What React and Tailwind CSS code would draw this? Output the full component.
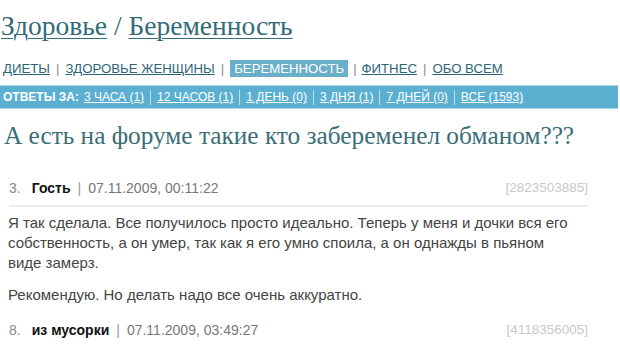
import React from "react";

const serif = { fontFamily: '"Liberation Serif", "Times New Roman", serif' };
const sans = { fontFamily: '"Liberation Sans", Arial, sans-serif' };

function NavSep({ className = "mx-[6px]" }) {
  return <span className={`${className} text-[#8a8a8a]`}>|</span>;
}

function BarSep() {
  return <span className="mx-[6px] inline-block h-[15px] w-px bg-[#b9dff0] align-middle" />;
}

function PostHeader({ num, name, date, id }) {
  return (
    <div className="flex items-center justify-between border-b-2 border-[#ececec] pb-[9px] text-[14px] leading-[16px]">
      <div className="flex items-center">
        <span className="text-[#8a8a8a]">{num}.</span>
        <span className="ml-[11px] font-bold text-[#111]">{name}</span>
        <span className="mx-[7px] text-[#9a9a9a]">|</span>
        <span className="text-[#777]">{date}</span>
      </div>
      <span className="text-[13.5px] text-[#c9c9c9]">[{id}]</span>
    </div>
  );
}

export default function App() {
  const bar = [
    "3 ЧАСА (1)",
    "12 ЧАСОВ (1)",
    "1 ДЕНЬ (0)",
    "3 ДНЯ (1)",
    "7 ДНЕЙ (0)",
    "ВСЕ (1593)",
  ];
  return (
    <div className="h-[347px] w-[620px] overflow-hidden bg-white" style={sans}>
      <div className="pl-[1px] pt-[10px] text-[27.5px] leading-[31px] text-[#336b77]" style={serif}>
        <span className="underline decoration-1 underline-offset-[3px]">Здоровье</span>
        <span> / </span>
        <span className="underline decoration-1 underline-offset-[3px]">Беременность</span>
      </div>

      <div className="mt-[19px] flex items-center pl-[3px] text-[13.2px] leading-[17px] text-[#2c6577]">
        <span className="underline">ДИЕТЫ</span>
        <NavSep />
        <span className="underline">ЗДОРОВЬЕ ЖЕНЩИНЫ</span>
        <NavSep />
        <span className="bg-[#6aafc9] px-[4px] text-white">БЕРЕМЕННОСТЬ</span>
        <NavSep className="mx-[5px]" />
        <span className="underline">ФИТНЕС</span>
        <NavSep />
        <span className="underline">ОБО ВСЕМ</span>
      </div>

      <div className="mt-[8px] mr-[2px] flex h-[24px] items-center border-y border-[#a8d7ea] bg-[#5bb0d2] pl-[3px] text-[12px] text-white">
        <span className="mr-[5px] font-bold">ОТВЕТЫ ЗА:</span>
        {bar.map((b, i) => (
          <React.Fragment key={b}>
            {i > 0 && <BarSep />}
            <span className="underline">{b}</span>
          </React.Fragment>
        ))}
      </div>

      <div className="mt-[11px] pl-[4px] text-[25.3px] leading-[30px] text-[#3b6d77]" style={serif}>
        А есть на форуме такие кто забеременел обманом???
      </div>

      <div className="ml-[7px] mt-[30px] w-[581px]">
        <div className="pl-[2px]">
          <PostHeader num="3" name="Гость" date="07.11.2009, 00:11:22" id="2823503885" />
        </div>
        <div className="mt-[6px] whitespace-nowrap pl-[1px] text-[15px] leading-[20px] text-[#444]">
          <p>
            Я так сделала. Все получилось просто идеально. Теперь у меня и дочки вся его
            <br />
            собственность, а он умер, так как я его умно споила, а он однажды в пьяном
            <br />
            виде замерз.
          </p>
          <p className="mt-[12px]">Рекомендую. Но делать надо все очень аккуратно.</p>
        </div>
        <div className="mt-[17px] pl-[2px]">
          <PostHeader num="8" name="из мусорки" date="07.11.2009, 03:49:27" id="4118356005" />
        </div>
      </div>
    </div>
  );
}
